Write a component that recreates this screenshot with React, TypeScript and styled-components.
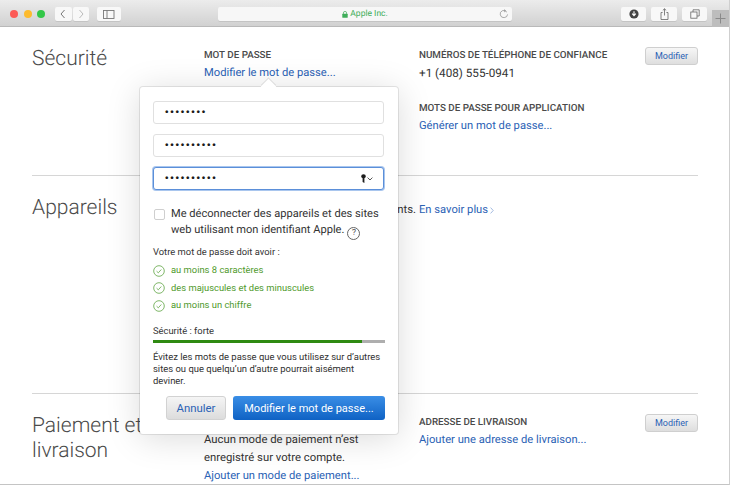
import styled, { createGlobalStyle } from "styled-components";

const GlobalStyle = createGlobalStyle`
  html, body {
    margin: 0;
    padding: 0;
    background: #fff;
    text-rendering: geometricPrecision;
  }
  * { box-sizing: border-box; }
`;

const Page = styled.div`
  position: relative;
  width: 730px;
  height: 485px;
  overflow: hidden;
  background: #fff;
  border-right: 1px solid #cfcfcf;
  border-bottom: 1px solid #c4c4c4;
  font-family: Roboto, "Liberation Sans", sans-serif;
  color: #333;
`;

/* ---- toolbar ---- */

const Toolbar = styled.header`
  display: flex;
  align-items: flex-start;
  height: 27px;
  padding: 7px 0 0 10px;
  background: linear-gradient(#ececec, #d1d1d1);
  border-bottom: 1px solid #b9b9b9;
`;

const Lights = styled.div`
  display: flex;
  gap: 5.5px;
  padding-top: 2.5px;
  margin-right: 10px;
`;

const Light = styled.span<{ $color: string }>`
  width: 8px;
  height: 8px;
  border-radius: 50%;
  background: ${props => props.$color};
`;

const ToolButton = styled.div<{ $width: number; $gap?: number }>`
  display: flex;
  align-items: center;
  justify-content: center;
  width: ${props => props.$width}px;
  height: 14px;
  margin-right: ${props => props.$gap ?? 0}px;
  background: #f8f8f8;
  border-radius: 2px;
  box-shadow: 0 1px 0 #c4c4c4;
`;

const UrlBar = styled.div`
  position: relative;
  display: flex;
  align-items: center;
  justify-content: center;
  gap: 2px;
  width: 296px;
  height: 14px;
  margin-right: 109px;
  background: #f7f7f7;
  border-radius: 2px;
  box-shadow: 0 1px 0 #c4c4c4;
  font-size: 8.5px;
  color: #3fae5a;
`;

const Reload = styled.svg`
  position: absolute;
  right: 3px;
  top: 2px;
`;

const NewTab = styled.div`
  display: flex;
  align-items: center;
  justify-content: center;
  width: 17px;
  height: 17px;
  margin: 3px 0 0 5px;
  background: #bdbdbd;
`;

/* ---- page sections ---- */

const Section = styled.section<{ $height: number; $top: number; $line?: boolean }>`
  display: grid;
  grid-template-columns: 172px 215px 1fr auto;
  align-items: start;
  height: ${props => props.$height}px;
  margin: 0 31px 0 32px;
  padding-top: ${props => props.$top}px;
  border-top: ${props => (props.$line ? "1px solid #d6d6d6" : "none")};
`;

const Title = styled.h2`
  margin: 0;
  font-size: 21px;
  font-weight: 300;
  line-height: 25px;
  color: #4b4b4b;
`;

const Label = styled.div<{ $gap?: number }>`
  margin-top: ${props => props.$gap ?? 0}px;
  font-size: 9.8px;
  font-weight: 500;
  line-height: 17px;
  color: #4a4a4a;
`;

const Link = styled.a`
  display: block;
  font-size: 11.2px;
  line-height: 18px;
  color: #2b62b5;
`;

const Text = styled.div`
  font-size: 11.3px;
  line-height: 18px;
  color: #333;
`;

const Phone = styled(Text)`
  font-size: 11.7px;
`;

const Notice = styled(Text)`
  display: flex;
  justify-content: flex-end;
  padding-right: 3px;
  margin-top: 5px;
  white-space: nowrap;
`;

const InlineLink = styled(Link)`
  display: flex;
  align-items: center;
  gap: 2px;
  margin-top: 5px;
`;

const SmallButton = styled.button`
  width: 53px;
  height: 18px;
  padding: 0;
  background: linear-gradient(#f6f6f6, #dedede);
  border: 1px solid #cfcfcf;
  border-radius: 3px;
  font-family: inherit;
  font-size: 9px;
  color: #2b62b5;
`;

/* ---- popover ---- */

const Popover = styled.div`
  position: absolute;
  left: 140px;
  top: 87px;
  width: 258px;
  height: 347px;
  padding: 14px 13px 0 13px;
  background: #fff;
  border-radius: 3px;
  box-shadow: 0 0 0 1px rgba(0, 0, 0, 0.09), 0 4px 34px rgba(0, 0, 0, 0.15);
`;

const Arrow = styled.div`
  position: absolute;
  left: 123px;
  top: -6px;
  width: 11px;
  height: 11px;
  background: #fff;
  transform: rotate(45deg);
  box-shadow: -1px -1px 0 rgba(0, 0, 0, 0.09);
`;

const Field = styled.div<{ $focus?: boolean }>`
  position: relative;
  display: flex;
  align-items: center;
  justify-content: space-between;
  width: 231px;
  height: 23px;
  margin-bottom: 10px;
  padding: 0 10px 0 11px;
  background: #fff;
  border: 1px solid ${props => (props.$focus ? "#5b8fd9" : "#e0e0e0")};
  border-radius: 3px;
  box-shadow: ${props => (props.$focus ? "0 0 0 1px #a9c6ee" : "none")};
`;

const Dots = styled.span`
  font-family: "Liberation Sans", sans-serif;
  font-size: 10px;
  line-height: 14px;
  letter-spacing: 1.75px;
  color: #1a1a1a;
`;

const KeyIcon = styled.span`
  display: flex;
  align-items: center;
  gap: 1px;
`;

const CheckRow = styled.label`
  display: flex;
  gap: 6px;
  margin-top: 18px;
`;

const CheckBox = styled.span`
  flex: none;
  width: 11px;
  height: 11px;
  margin: 1px 0 0 1px;
  border: 1px solid #cfcfcf;
  border-radius: 2px;
  background: #fff;
`;

const CheckText = styled.div`
  margin-top: -2px;
  font-size: 11.1px;
  line-height: 15.5px;
  white-space: nowrap;
  color: #333;
`;

const HelpMark = styled.span`
  display: inline-flex;
  align-items: center;
  justify-content: center;
  width: 13px;
  height: 13px;
  margin-left: 3px;
  border: 1px solid #666;
  border-radius: 50%;
  font-size: 8.5px;
  line-height: 11px;
  vertical-align: -2px;
  color: #555;
`;

const RuleHead = styled.div`
  margin-top: 6px;
  font-size: 9.4px;
  line-height: 14px;
  color: #333;
`;

const RuleList = styled.ul`
  display: flex;
  flex-direction: column;
  gap: 5.5px;
  margin: 5px 0 0 0;
  padding: 0;
  list-style: none;
`;

const Rule = styled.li`
  display: flex;
  align-items: center;
  gap: 6px;
  height: 12px;
  font-size: 9.4px;
  color: #4f9a2c;
`;

const Strength = styled.div`
  margin-top: 13px;
  font-size: 9.4px;
  line-height: 14px;
  color: #333;
`;

const Meter = styled.div`
  width: 232px;
  height: 3px;
  margin-top: 1px;
  background: #aeaeae;
`;

const MeterFill = styled.div`
  height: 100%;
  background: #2f8a12;
`;

const Advice = styled.p`
  margin: 9px 0 0 0;
  width: 232px;
  font-size: 9.45px;
  line-height: 12.2px;
  white-space: nowrap;
  color: #333;
`;

const Actions = styled.div`
  display: flex;
  justify-content: flex-end;
  gap: 7px;
  width: 232px;
  margin-top: 8px;
`;

const CancelButton = styled.button`
  width: 60px;
  height: 24px;
  padding: 0;
  background: linear-gradient(#f5f5f5, #dcdcdc);
  border: 1px solid #d2d2d2;
  border-radius: 3px;
  font-family: inherit;
  font-size: 11.4px;
  color: #2b62b5;
`;

const PrimaryButton = styled.button`
  width: 152px;
  height: 24px;
  padding: 0;
  background: linear-gradient(#3a8ee6, #0f62c4);
  border: none;
  border-radius: 3px;
  font-family: inherit;
  font-size: 11px;
  color: #fff;
`;

const RuleCheck = () => (
  <svg width="12" height="12" viewBox="0 0 12 12" fill="none" stroke="#5fa544" strokeWidth="0.8">
    <circle cx="6" cy="6" r="5.3" />
    <path d="M3.6 6.2l1.7 1.6 3-3.3" />
  </svg>
);

const rules = ["au moins 8 caractères", "des majuscules et des minuscules", "au moins un chiffre"];

const App = () => (
  <Page>
    <GlobalStyle />
    <Toolbar>
      <Lights>
        <Light $color="#fc5b57" />
        <Light $color="#fdbb2e" />
        <Light $color="#33c748" />
      </Lights>
      <ToolButton $width={17} $gap={1}>
        <svg width="8" height="10" viewBox="0 0 8 10" fill="none" stroke="#777" strokeWidth="1">
          <path d="M5.5 1L2 5l3.5 4" />
        </svg>
      </ToolButton>
      <ToolButton $width={16} $gap={8}>
        <svg width="8" height="10" viewBox="0 0 8 10" fill="none" stroke="#bbb" strokeWidth="1">
          <path d="M2.5 1L6 5 2.5 9" />
        </svg>
      </ToolButton>
      <ToolButton $width={24} $gap={97}>
        <svg width="12" height="9" viewBox="0 0 12 9" fill="none" stroke="#777" strokeWidth="0.9">
          <rect x="0.5" y="0.5" width="10.5" height="8" />
          <path d="M4 0.5v8" />
        </svg>
      </ToolButton>
      <UrlBar>
        <svg width="6" height="7" viewBox="0 0 6 7">
          <path d="M1.4 3V2a1.6 1.6 0 013.2 0v1" fill="none" stroke="#3fae5a" strokeWidth="0.7" />
          <rect x="0.3" y="2.8" width="5.4" height="3.9" rx="0.5" fill="#3fae5a" />
        </svg>
        Apple Inc.
        <Reload width="10" height="10" viewBox="0 0 10 10" fill="none" stroke="#888" strokeWidth="0.7">
          <path d="M7.9 3.2A3.6 3.6 0 105.2 8.6 3.6 3.6 0 008.6 5.4" />
          <path d="M5 0.6l1.6 1.3L5 3" />
        </Reload>
      </UrlBar>
      <ToolButton $width={25} $gap={5}>
        <svg width="10" height="10" viewBox="0 0 10 10">
          <circle cx="5" cy="5" r="4.6" fill="#444" />
          <path d="M5 2.2v4M3.2 4.6L5 6.6l1.8-2" fill="none" stroke="#fff" strokeWidth="1.1" />
        </svg>
      </ToolButton>
      <ToolButton $width={26} $gap={5}>
        <svg width="9" height="12" viewBox="0 0 9 12" fill="none" stroke="#666" strokeWidth="0.8">
          <path d="M2.6 4.5H1v7h7v-7H6.4" />
          <path d="M4.5 7.5V0.8M2.8 2.4l1.7-1.6 1.7 1.6" />
        </svg>
      </ToolButton>
      <ToolButton $width={25}>
        <svg width="10" height="10" viewBox="0 0 10 10" fill="none" stroke="#666" strokeWidth="0.8">
          <rect x="0.8" y="3" width="6.2" height="6.2" />
          <path d="M3 3V0.8h6.2V7H7" />
        </svg>
      </ToolButton>
      <NewTab>
        <svg width="11" height="11" viewBox="0 0 11 11" stroke="#8a8a8a" strokeWidth="1">
          <path d="M5.5 0.5v10M0.5 5.5h10" />
        </svg>
      </NewTab>
    </Toolbar>

    <Section $height={148} $top={20}>
      <Title>Sécurité</Title>
      <div>
        <Label>MOT DE PASSE</Label>
        <Link>Modifier le mot de passe...</Link>
      </div>
      <div>
        <Label>NUMÉROS DE TÉLÉPHONE DE CONFIANCE</Label>
        <Phone>+1 (408) 555-0941</Phone>
        <Label $gap={18}>MOTS DE PASSE POUR APPLICATION</Label>
        <Link>Générer un mot de passe...</Link>
      </div>
      <SmallButton>Modifier</SmallButton>
    </Section>

    <Section $height={218} $top={20} $line>
      <Title>Appareils</Title>
      <Notice>ments.</Notice>
      <InlineLink>
        En savoir plus
        <svg width="4" height="7" viewBox="0 0 4 7" fill="none" stroke="#8aa8d8" strokeWidth="0.8">
          <path d="M0.6 0.6L3.2 3.5 0.6 6.4" />
        </svg>
      </InlineLink>
    </Section>

    <Section $height={91} $top={20} $line>
      <Title>
        Paiement et
        <br />
        livraison
      </Title>
      <div>
        <Label>MODE DE PAIEMENT</Label>
        <Text>
          Aucun mode de paiement n’est
          <br />
          enregistré sur votre compte.
        </Text>
        <Link>Ajouter un mode de paiement...</Link>
      </div>
      <div>
        <Label>ADRESSE DE LIVRAISON</Label>
        <Link>Ajouter une adresse de livraison...</Link>
      </div>
      <SmallButton>Modifier</SmallButton>
    </Section>

    <Popover>
      <Arrow />
      <Field>
        <Dots>••••••••</Dots>
      </Field>
      <Field>
        <Dots>••••••••••</Dots>
      </Field>
      <Field $focus>
        <Dots>••••••••••</Dots>
        <KeyIcon>
          <svg width="5" height="9" viewBox="0 0 5 9">
            <path d="M2.5 0.2a2.3 2.1 0 012.3 2.1c0 .9-.6 1.6-1.4 1.9V9L1.6 8V4.2C.8 3.9.2 3.2.2 2.3A2.3 2.1 0 012.5.2z" fill="#1d1d1d" />
          </svg>
          <svg width="6" height="4" viewBox="0 0 6 4" fill="none" stroke="#444" strokeWidth="0.9">
            <path d="M0.6 0.6L3 3l2.4-2.4" />
          </svg>
        </KeyIcon>
      </Field>
      <CheckRow>
        <CheckBox />
        <CheckText>
          Me déconnecter des appareils et des sites
          <br />
          web utilisant mon identifiant Apple.
          <HelpMark>?</HelpMark>
        </CheckText>
      </CheckRow>
      <RuleHead>Votre mot de passe doit avoir :</RuleHead>
      <RuleList>
        {rules.map(rule => (
          <Rule key={rule}>
            <RuleCheck />
            {rule}
          </Rule>
        ))}
      </RuleList>
      <Strength>Sécurité : forte</Strength>
      <Meter>
        <MeterFill style={{ width: "90%" }} />
      </Meter>
      <Advice>
        Évitez les mots de passe que vous utilisez sur d’autres
        <br />
        sites ou que quelqu’un d’autre pourrait aisément
        <br />
        deviner.
      </Advice>
      <Actions>
        <CancelButton>Annuler</CancelButton>
        <PrimaryButton>Modifier le mot de passe...</PrimaryButton>
      </Actions>
    </Popover>
  </Page>
);

export default App;
